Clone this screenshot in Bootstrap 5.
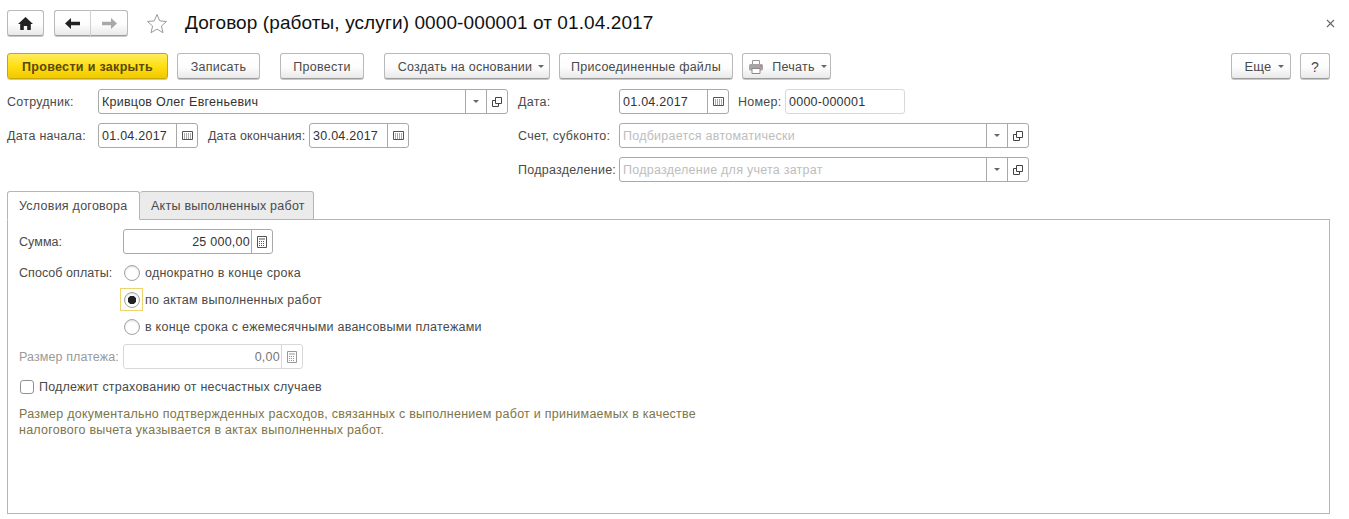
<!doctype html>
<html lang="ru">
<head>
    <meta charset="utf-8" />
    <title>Договор (работы, услуги) 0000-000001 от 01.04.2017</title>
    <link href="https://cdn.jsdelivr.net/npm/bootstrap@5.3.0/dist/css/bootstrap.min.css" rel="stylesheet" />
    <style>
        body {
            background-color: #fff;
            color: #4a4a4a;
            font-family: "Liberation Sans", Arial, sans-serif;
            font-size: 12.5px;
            letter-spacing: .25px;
            line-height: 14px;
            overflow: hidden;
        }

        .page-wrap {
            padding: 10px 19px 0 7px;
        }

        .tool-btn {
            height: 26px;
            padding: 1px 0 0;
            font-size: 12.5px;
            line-height: 14px;
            letter-spacing: .25px;
            color: #4a4a4a;
            border: 1px solid #b9b9b9;
            border-bottom-color: #9b9b9b;
            border-radius: 3px;
            background: linear-gradient(#fff, #fdfdfd 55%, #e9e9e9);
            box-shadow: 0 1px 0 #c9c9c9;
            display: flex;
            align-items: center;
            justify-content: center;
        }

        .btn-main {
            width: 161px;
            font-weight: 700;
            letter-spacing: .32px;
            color: #57490a;
            border-color: #c9a800;
            background: linear-gradient(#ffec5e, #ffdf14 50%, #f2c900);
        }

        .w-home { width: 37px; }
        .w-nav { width: 37px; }
        .w-write { width: 83px; margin-left: 9px; }
        .w-post { width: 84px; margin-left: 20px; }
        .w-create { width: 166px; margin-left: 20px; padding-left: 8px; }
        .w-files { width: 174px; margin-left: 9px; }
        .w-print { width: 89px; margin-left: 9px; padding-left: 2px; }
        .w-more { width: 60px; padding-left: 6px; font-size: 13px; }
        .w-help { width: 30px; margin-left: 9px; font-size: 14px; }

        .nav-group {
            margin-left: 10px;
        }

        .nav-group .tool-btn:first-child {
            border-radius: 3px 0 0 3px;
            border-right-color: #d0d0d0;
        }

        .nav-group .tool-btn:last-child {
            border-radius: 0 3px 3px 0;
            border-left: 0;
        }

        .fav-star {
            margin: 0 0 0 18px;
        }

        .doc-title {
            margin: 0 0 0 17px;
            font-size: 19px;
            line-height: 26px;
            letter-spacing: .1px;
            font-weight: 400;
            color: #111;
        }

        .close-mark {
            width: 9px;
            height: 9px;
            margin: 0 -5px 0 0;
        }

        .tools-row {
            margin-top: 17px;
        }

        .down-caret {
            display: inline-block;
            width: 0;
            height: 0;
            margin-left: 6px;
            border-left: 3px solid transparent;
            border-right: 3px solid transparent;
            border-top: 3px solid #666;
        }

        .form-area {
            margin-top: 10px;
        }

        .left-block {
            width: 511px;
        }

        .field-row {
            height: 25px;
            margin-bottom: 9px;
            display: flex;
            align-items: center;
        }

        .field-box {
            height: 25px;
            display: flex;
            align-items: stretch;
            border: 1px solid #a9a9a9;
            border-radius: 3px;
            background: #fff;
        }

        .field-box input {
            flex: 1 1 auto;
            min-width: 0;
            width: 100%;
            border: 0;
            outline: 0;
            padding: 0 3px;
            background: transparent;
            font: inherit;
            letter-spacing: inherit;
            color: #333;
        }

        .field-box input::placeholder {
            color: #bdbdbd;
            opacity: 1;
        }

        .field-btn {
            width: 21px;
            flex: none;
            display: flex;
            align-items: center;
            justify-content: center;
            border-left: 1px solid #a9a9a9;
        }

        .field-btn .down-caret {
            margin: 0;
        }

        .lbl-fixed { width: 91px; flex: none; white-space: nowrap; }
        .box-person { width: 410px; }
        .box-date { width: 100px; }
        .lbl-end { width: 101px; flex: none; margin-left: 10px; white-space: nowrap; letter-spacing: .15px; }
        .right-labels { width: 101px; flex: none; white-space: nowrap; }
        .box-right { width: 410px; }
        .box-doc-date { width: 110px; }
        .lbl-num { width: 47px; flex: none; margin-left: 9px; }
        .box-num { width: 120px; border-color: #d8d8d8; }

        .tab-strip {
            height: 29px;
            position: relative;
            z-index: 1;
        }

        .tab-strip .nav-link {
            height: 29px;
            padding: 7px 11px 0;
            font-size: 12.5px;
            line-height: 14px;
            color: #4a4a4a;
            border: 1px solid #b5b5b5;
            border-radius: 3px 3px 0 0;
            margin: 0;
            white-space: nowrap;
        }

        .tab-strip .nav-link.active {
            width: 133px;
            background: #fff;
            color: #4a4a4a;
            border-color: #b5b5b5 #b5b5b5 #fff;
        }

        .tab-strip .tab-other {
            width: 174px;
            background: #ebebeb;
            border-left: 0;
            border-bottom-color: #b5b5b5;
        }

        .tab-body {
            height: 295px;
            margin-top: -1px;
            padding: 9px 11px 0;
            border: 1px solid #b5b5b5;
        }

        .lbl-sum { width: 104px; flex: none; white-space: nowrap; letter-spacing: .05px; }
        .box-sum { width: 150px; }
        .box-sum input { text-align: right; padding-right: 1px; }
        .box-pay { width: 180px; border-color: #d8d8d8; }
        .box-pay input { text-align: right; padding-right: 1px; color: #777; }
        .box-pay .field-btn { border-left-color: #d8d8d8; }
        .muted-label { color: #9a9a9a; }
        .lbl-pay { width: 104px; flex: none; white-space: nowrap; letter-spacing: .1px; }

        .pay-row {
            height: 27px;
            display: flex;
            align-items: center;
        }

        .pay-options {
            margin-top: 5px;
        }

        .radio-mark {
            width: 16px;
            height: 16px;
            margin: 0 5px 0 1px;
            flex: none;
            border: 1px solid #a3a3a3;
            box-shadow: inset 0 1px 2px #ddd;
            background-image: none !important;
            background-color: #fff !important;
            border-color: #a3a3a3 !important;
        }

        .radio-on {
            display: flex;
            align-items: center;
            justify-content: center;
            width: 23px;
            height: 23px;
            margin: 0 2px 0 -3px;
            border: 1px solid #eed46d;
        }

        .radio-on .radio-mark {
            margin: 0;
            background: radial-gradient(circle, #222 0 4px, #fff 4.5px) !important;
        }

        .pay-size {
            margin-top: 4px;
        }

        .check-row {
            margin-top: 9px;
            height: 18px;
            display: flex;
            align-items: center;
        }

        .check-mark {
            width: 14px;
            height: 14px;
            margin: 0 5px 0 1px;
            flex: none;
            border: 1px solid #8f8f8f;
            border-radius: 3px;
            background-image: none !important;
        }

        .check-text { letter-spacing: .2px; }

        .note-text {
            margin: 10px 0 0;
            line-height: 16px;
            color: #7d7547;
        }
    </style>
</head>
<body>

<div class="page-wrap">
    <div class="d-flex align-items-center">
        <button class="btn tool-btn w-home" type="button">
            <svg width="15" height="13" viewBox="0 0 15 13"><path fill="#222" d="M7.500 0 0 7h2.200v6h3.600V9h3.400v4h3.600V7H15z"/></svg>
        </button>
        <div class="d-flex nav-group">
            <button class="btn tool-btn w-nav" type="button">
                <svg width="15" height="11" viewBox="0 0 15 11"><path fill="#222" d="M6 0 0 5.500 6 11V7.300h9V3.700H6z"/></svg>
            </button>
            <button class="btn tool-btn w-nav" type="button">
                <svg width="15" height="11" viewBox="0 0 15 11"><path fill="#a8a8a8" d="M9 0l6 5.500L9 11V7.300H0V3.700h9z"/></svg>
            </button>
        </div>
        <svg class="fav-star" width="22" height="21" viewBox="0 0 22 21"><path fill="#fff" stroke="#9a9a9a" d="M11 1.500l2.800 6.400 6.700.6-5.100 4.500 1.600 6.700-6-3.600-6 3.600 1.600-6.700-5.100-4.500 6.700-.6z"/></svg>
        <h1 class="doc-title">Договор (работы, услуги) 0000-000001 от 01.04.2017</h1>
        <svg class="close-mark ms-auto" viewBox="0 0 9 9"><path stroke="#666" stroke-width="1.100" d="M1 1l7 7M8 1 1 8"/></svg>
    </div>

    <div class="d-flex tools-row">
        <button class="btn tool-btn btn-main" type="button">Провести и закрыть</button>
        <button class="btn tool-btn w-write" type="button">Записать</button>
        <button class="btn tool-btn w-post" type="button">Провести</button>
        <button class="btn tool-btn w-create" type="button">Создать на основании<span class="down-caret"></span></button>
        <button class="btn tool-btn w-files" type="button">Присоединенные файлы</button>
        <button class="btn tool-btn w-print" type="button">
            <svg class="me-2" width="16" height="14" viewBox="0 0 16 14"><path fill="#fff" stroke="#999" d="M4.500.5h7v4h-7z"/><rect x="1" y="4" width="14" height="6.500" rx="1.500" fill="#a5a5a5"/><path fill="#fff" stroke="#8a8a8a" d="M4 8.500h8v5H4z"/><path fill="#d9734a" d="M12.500 5.500h1.500v1.500h-1.500z"/></svg>
            Печать<span class="down-caret"></span>
        </button>
        <button class="btn tool-btn w-more ms-auto" type="button">Еще<span class="down-caret"></span></button>
        <button class="btn tool-btn w-help" type="button">?</button>
    </div>

    <div class="d-flex form-area">
        <div class="left-block">
            <div class="field-row">
                <span class="lbl-fixed">Сотрудник:</span>
                <div class="field-box box-person">
                    <input type="text" value="Кривцов Олег Евгеньевич" />
                    <span class="field-btn"><span class="down-caret"></span></span>
                    <span class="field-btn">
                        <svg width="10" height="10" viewBox="0 0 10 10"><path fill="none" stroke="#444" d="M3.500.5h6v6h-6zM3.500 3.500H.5v6h6V6.500"/></svg>
                    </span>
                </div>
            </div>
            <div class="field-row">
                <span class="lbl-fixed">Дата начала:</span>
                <div class="field-box box-date">
                    <input type="text" value="01.04.2017" />
                    <span class="field-btn">
                        <svg width="11" height="9" viewBox="0 0 11 9"><path fill="none" stroke="#555" d="M.5.500h10v8H.5z"/><path stroke="#555" stroke-dasharray="1 1" d="M2 3h8M2 5h8M2 7h8"/></svg>
                    </span>
                </div>
                <span class="lbl-end">Дата окончания:</span>
                <div class="field-box box-date">
                    <input type="text" value="30.04.2017" />
                    <span class="field-btn">
                        <svg width="11" height="9" viewBox="0 0 11 9"><path fill="none" stroke="#555" d="M.5.500h10v8H.5z"/><path stroke="#555" stroke-dasharray="1 1" d="M2 3h8M2 5h8M2 7h8"/></svg>
                    </span>
                </div>
            </div>
        </div>
        <div class="flex-grow-1">
            <div class="field-row">
                <span class="right-labels">Дата:</span>
                <div class="field-box box-doc-date">
                    <input type="text" value="01.04.2017" />
                    <span class="field-btn">
                        <svg width="11" height="9" viewBox="0 0 11 9"><path fill="none" stroke="#555" d="M.5.500h10v8H.5z"/><path stroke="#555" stroke-dasharray="1 1" d="M2 3h8M2 5h8M2 7h8"/></svg>
                    </span>
                </div>
                <span class="lbl-num">Номер:</span>
                <div class="field-box box-num">
                    <input type="text" value="0000-000001" />
                </div>
            </div>
            <div class="field-row">
                <span class="right-labels">Счет, субконто:</span>
                <div class="field-box box-right">
                    <input type="text" placeholder="Подбирается автоматически" />
                    <span class="field-btn"><span class="down-caret"></span></span>
                    <span class="field-btn">
                        <svg width="10" height="10" viewBox="0 0 10 10"><path fill="none" stroke="#444" d="M3.500.5h6v6h-6zM3.500 3.500H.5v6h6V6.500"/></svg>
                    </span>
                </div>
            </div>
            <div class="field-row">
                <span class="right-labels">Подразделение:</span>
                <div class="field-box box-right">
                    <input type="text" placeholder="Подразделение для учета затрат" />
                    <span class="field-btn"><span class="down-caret"></span></span>
                    <span class="field-btn">
                        <svg width="10" height="10" viewBox="0 0 10 10"><path fill="none" stroke="#444" d="M3.500.5h6v6h-6zM3.500 3.500H.5v6h6V6.500"/></svg>
                    </span>
                </div>
            </div>
        </div>
    </div>

    <ul class="nav tab-strip">
        <li class="nav-item"><a class="nav-link active" href="#">Условия договора</a></li>
        <li class="nav-item"><a class="nav-link tab-other" href="#">Акты выполненных работ</a></li>
    </ul>
    <div class="tab-body">
        <div class="d-flex align-items-center">
            <span class="lbl-sum">Сумма:</span>
            <div class="field-box box-sum">
                <input type="text" value="25 000,00" />
                <span class="field-btn">
                    <svg width="10" height="12" viewBox="0 0 10 12"><path fill="none" stroke="#555" d="M.5.500h9v11h-9z"/><path stroke="#555" d="M2 3h6"/><path stroke="#555" stroke-dasharray="1 1" d="M2 5.500h6M2 7.500h6M2 9.500h6"/></svg>
                </span>
            </div>
        </div>
        <div class="pay-options">
            <div class="pay-row">
                <span class="lbl-sum">Способ оплаты:</span>
                <input class="form-check-input radio-mark" type="radio" name="payKind" />
                <span>однократно в конце срока</span>
            </div>
            <div class="pay-row">
                <span class="lbl-sum"></span>
                <span class="radio-on"><input class="form-check-input radio-mark" type="radio" name="payKind2" /></span>
                <span>по актам выполненных работ</span>
            </div>
            <div class="pay-row">
                <span class="lbl-sum"></span>
                <input class="form-check-input radio-mark" type="radio" name="payKind" />
                <span>в конце срока с ежемесячными авансовыми платежами</span>
            </div>
        </div>
        <div class="d-flex align-items-center pay-size">
            <span class="lbl-pay muted-label">Размер платежа:</span>
            <div class="field-box box-pay">
                <input type="text" value="0,00" disabled />
                <span class="field-btn">
                    <svg width="10" height="12" viewBox="0 0 10 12"><path fill="none" stroke="#999" d="M.5.500h9v11h-9z"/><path stroke="#999" d="M2 3h6"/><path stroke="#999" stroke-dasharray="1 1" d="M2 5.500h6M2 7.500h6M2 9.500h6"/></svg>
                </span>
            </div>
        </div>
        <div class="check-row">
            <input class="form-check-input check-mark" type="checkbox" />
            <span class="check-text">Подлежит страхованию от несчастных случаев</span>
        </div>
        <p class="note-text">Размер документально подтвержденных расходов, связанных с выполнением работ и принимаемых в качестве<br>налогового вычета указывается в актах выполненных работ.</p>
    </div>
</div>

<script src="https://cdn.jsdelivr.net/npm/bootstrap@5.3.0/dist/js/bootstrap.bundle.min.js"></script>
</body>
</html>
